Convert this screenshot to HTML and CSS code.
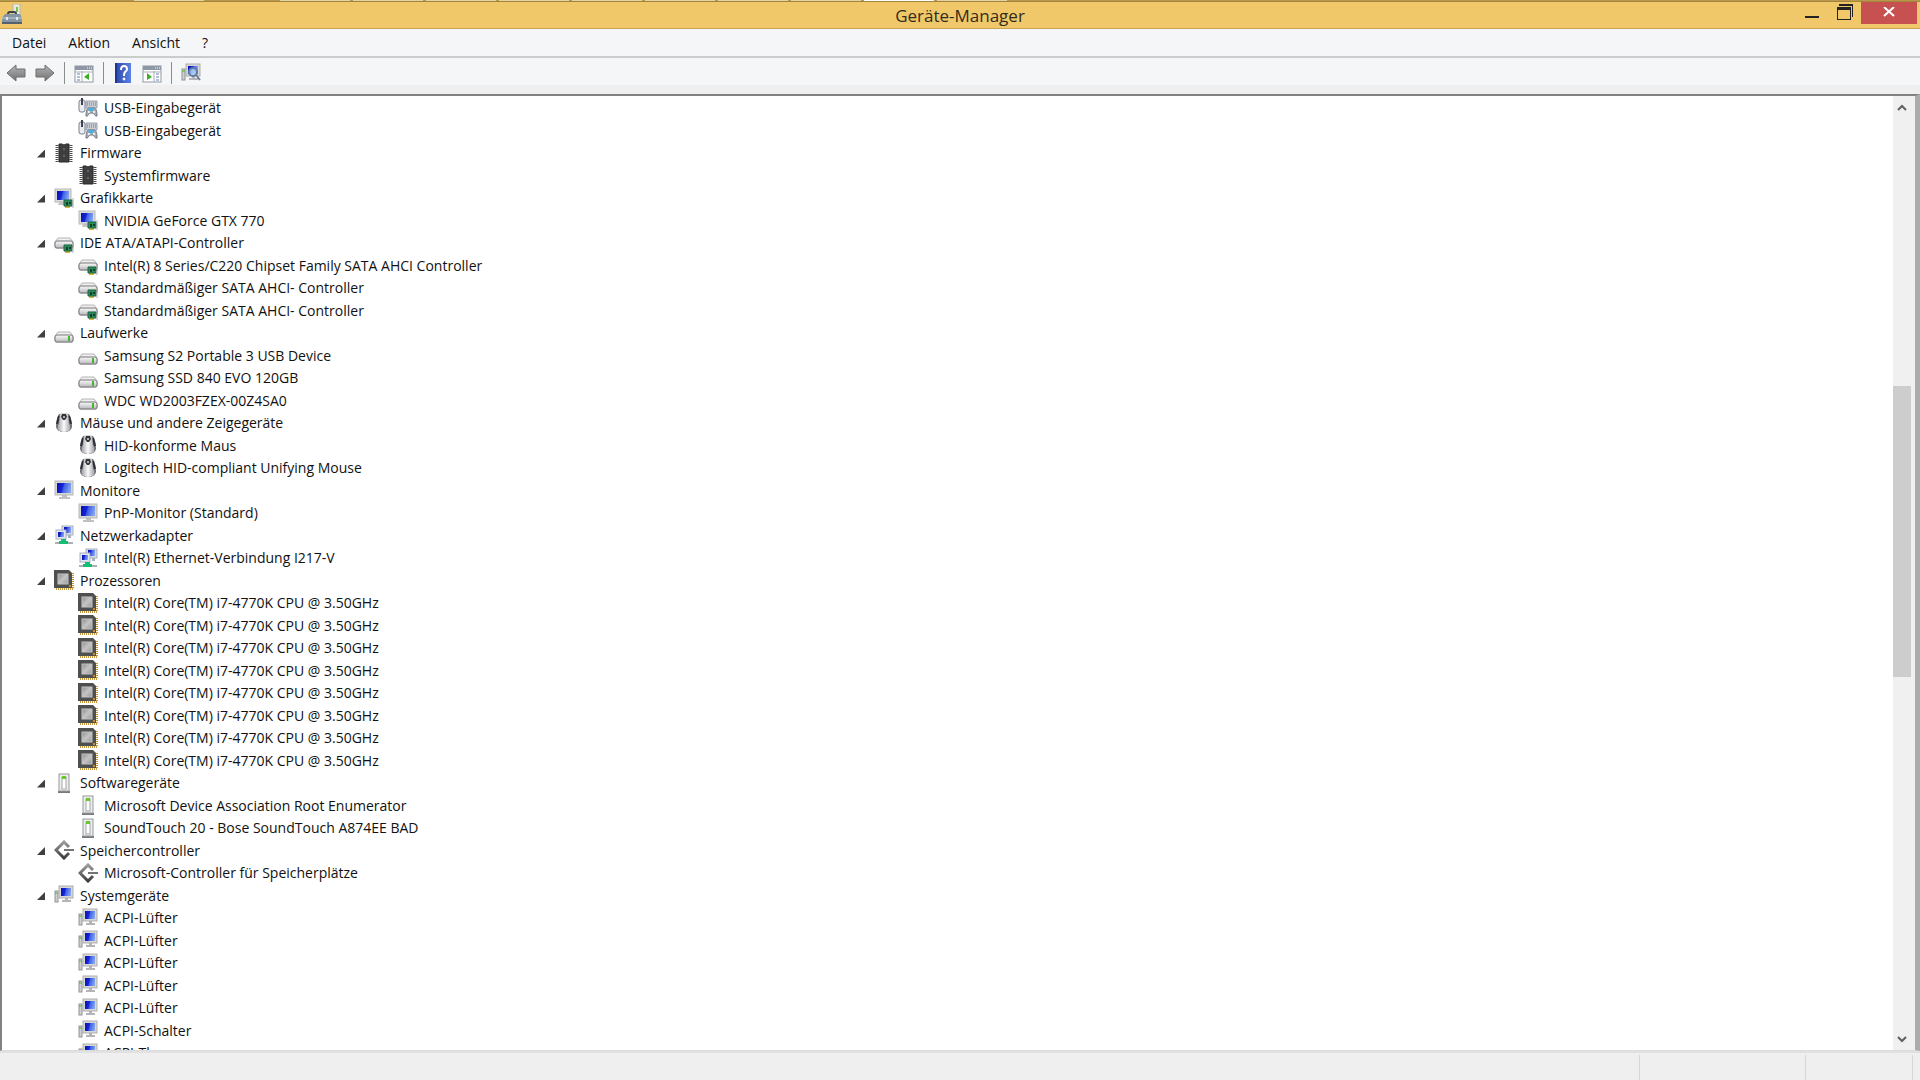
FILE: index.html
```
<!DOCTYPE html>
<html lang="de">
<head>
  <meta charset="UTF-8" />
  <meta name="viewport" content="width=device-width, initial-scale=1.0" />
  <title>Geräte-Manager</title>
  <link rel="stylesheet" href="styles.css">
</head>
<body>
  <!-- Icon sprite -->
  <svg class="sprite" aria-hidden="true">
    <defs>
      <linearGradient id="screen" x1="0" y1="0.3" x2="1" y2="0.5">
        <stop offset="0" stop-color="#0a12b4" />
        <stop offset="0.4" stop-color="#1526d8" />
        <stop offset="0.5" stop-color="#3f5fe4" />
        <stop offset="1" stop-color="#86a6f4" />
      </linearGradient>
      <linearGradient id="metal" x1="0" y1="0" x2="0" y2="1">
        <stop offset="0" stop-color="#fafafa" />
        <stop offset="1" stop-color="#b8b8bc" />
      </linearGradient>
      <linearGradient id="silver" x1="0" y1="0" x2="1" y2="0">
        <stop offset="0" stop-color="#a4a4a8" />
        <stop offset="0.5" stop-color="#fbfbfb" />
        <stop offset="1" stop-color="#a4a4a8" />
      </linearGradient>
      <linearGradient id="grey" x1="0" y1="0" x2="0" y2="1">
        <stop offset="0" stop-color="#b4b4b4" />
        <stop offset="1" stop-color="#727272" />
      </linearGradient>
      <linearGradient id="book" x1="0" y1="0" x2="1" y2="0">
        <stop offset="0" stop-color="#2a46a8" />
        <stop offset="1" stop-color="#5b82e6" />
      </linearGradient>
      <linearGradient id="die" x1="0" y1="0" x2="1" y2="1">
        <stop offset="0" stop-color="#8e8e8e" />
        <stop offset="0.5" stop-color="#c4c4c4" />
        <stop offset="1" stop-color="#9a9a9a" />
      </linearGradient>
      <linearGradient id="diamond" x1="0" y1="0" x2="0" y2="1">
        <stop offset="0" stop-color="#9c9c9c" />
        <stop offset="1" stop-color="#3c3c3c" />
      </linearGradient>
    </defs>

    <symbol id="i-usb" viewBox="0 0 20 20">
      <path d="M8 3h11v7H8z" fill="#c9ccd3" stroke="#9ba0aa" stroke-width="1" />
      <path d="M9 5h9M9 7h9" stroke="#747b88" stroke-dasharray="1 1" />
      <rect x="1" y="2" width="6" height="12" rx="2" fill="#e9ebef" stroke="#7b818c" />
      <path d="M4 0v7" stroke="#3d4350" stroke-width="2" />
      <path d="M8 18c0-5 1-8 3-8h5c2 0 3 3 3 8-2 1-3-3-4-3h-3c-1 0-2 4-4 3z" fill="#a9afb9" stroke="#6c7480" />
      <path d="M10 10h6l-1 3h-4z" fill="#46aee0" />
      <circle cx="11" cy="14" r="1" fill="#fff" /><circle cx="16" cy="14" r="1" fill="#fff" />
    </symbol>
    <symbol id="i-chip" viewBox="0 0 20 20">
      <path d="M3 2v17M17 2v17" stroke="#4c4c4c" stroke-width="3" stroke-dasharray="1 1" />
      <path d="M5 1h3q2 2 4 0h3v18H5z" fill="#3e3e40" stroke="#2a2a2a" />
      <circle cx="10" cy="6" r="1" fill="#6c6e71" /><circle cx="10" cy="13" r="1" fill="#6c6e71" />
    </symbol>
    <symbol id="i-monitor" viewBox="0 0 20 20">
      <path d="M8 15h5v2h3v2H5v-2h3z" fill="#bfc1c4" />
      <rect x="1" y="1" width="18" height="14" fill="#d6d7d4" stroke="#b7b9b5" />
      <rect x="3" y="3" width="14" height="10" fill="url(#screen)" />
    </symbol>
    <symbol id="i-card" viewBox="0 0 20 20">
      <path d="M11 18h5v2h-5z" fill="#e2b13c" />
      <path d="M10 12h8v6h-8z" fill="#2f8b5d" stroke="#17643d" />
      <path d="M12 14h2v3h-2zM15 14h2v2h-2z" fill="#123f2a" />
      <path d="M19 10v10" stroke="#a9acae" />
    </symbol>
    <symbol id="i-display" viewBox="0 0 20 20">
      <path d="M5 14h6v3H4z" fill="#c3c5c8" />
      <rect x="1" y="1" width="16" height="13" fill="#d9dad7" stroke="#b9bbb7" />
      <rect x="3" y="3" width="12" height="9" fill="url(#screen)" />
      <use href="#i-card" />
    </symbol>
    <symbol id="i-drive" viewBox="0 0 20 20">
      <path d="M4 9h12l3 4v5q0 1-1 1H2q-1 0-1-1v-5z" fill="#f0f0f0" stroke="#b4b4b6" />
      <rect x="1" y="12" width="18" height="7" rx="2" fill="url(#metal)" stroke="#77777b" />
      <path d="M15 13v5" stroke="#43b82c" stroke-width="2" />
    </symbol>
    <symbol id="i-ide" viewBox="0 0 20 20">
      <path d="M4 5h12l3 4v5q0 1-1 1H2q-1 0-1-1V9z" fill="#f0f0f0" stroke="#b4b4b6" />
      <rect x="1" y="8" width="18" height="7" rx="2" fill="url(#metal)" stroke="#77777b" />
      <use href="#i-card" />
    </symbol>
    <symbol id="i-mouse" viewBox="0 0 20 20">
      <path d="M5 1q-3 5-3 13 1 5 8 5t8-5q0-8-3-13-5-1-10 0z" fill="#6c7078" />
      <path d="M5 3l-2 8M15 3l2 8" stroke="#2e3138" stroke-width="2" />
      <path d="M6 1q4-1 8 0l1 9q2 4 1 7-6 4-12 0-1-3 1-7z" fill="url(#silver)" />
      <path d="M8 1h4l1 3-2 3H9L7 4z" fill="#33363c" />
      <circle cx="10" cy="4" r="1" fill="#d8d8d8" />
    </symbol>
    <symbol id="i-net" viewBox="0 0 20 20">
      <rect x="8" y="1" width="11" height="9" fill="#d5dbe8" stroke="#a8b0c2" />
      <rect x="10" y="2" width="7" height="6" fill="url(#screen)" />
      <path d="M14 10h3v3h-3z" fill="#a8b0c0" />
      <rect x="2" y="5" width="10" height="9" fill="#e3e7f0" stroke="#a8b0c2" />
      <rect x="4" y="7" width="6" height="5" fill="url(#screen)" />
      <path d="M1 18h18" stroke="#a8b2b0" stroke-width="2" />
      <path d="M7 14h5v2h2v3H5v-3h2z" fill="#17bd72" />
    </symbol>
    <symbol id="i-cpu" viewBox="0 0 20 20">
      <path d="M19 3v16M2 19h17" stroke="#c8963c" stroke-width="2" stroke-dasharray="1 1" />
      <path d="M0 0h15l3 3v15H0z" fill="#4e504f" />
      <rect x="4" y="4" width="10" height="10" fill="url(#die)" stroke="#c4c4c4" />
      <circle cx="16" cy="16" r="1" fill="#ff9c1a" />
    </symbol>
    <symbol id="i-soft" viewBox="0 0 20 20">
      <path d="M4 18h12v2H4z" fill="#77797b" />
      <rect x="5" y="1" width="10" height="17" fill="#eceded" stroke="#97999b" />
      <rect x="8" y="4" width="4" height="12" fill="#fff" stroke="#a5a7a9" />
      <path d="M8 3h4v3H8z" fill="#6cc72f" />
    </symbol>
    <symbol id="i-storage" viewBox="0 0 20 20">
      <path d="M15 7l-5-5-8 8 8 8 5-5" fill="none" stroke="url(#diamond)" stroke-width="3" />
      <path d="M10 10h10" stroke="#747474" stroke-width="2" />
    </symbol>
    <symbol id="i-system" viewBox="0 0 20 20">
      <rect x="1" y="6" width="3" height="11" fill="#cfd1d2" stroke="#909496" />
      <path d="M1 8h3" stroke="#4dbd34" />
      <path d="M11 13h3v2h3v2H8v-2h3z" fill="#b3b5b7" />
      <rect x="5" y="1" width="14" height="12" fill="#d6d7d6" stroke="#adafae" />
      <rect x="7" y="3" width="10" height="8" fill="url(#screen)" />
    </symbol>
  </svg>

  <div class="window">
    <div class="backdrop" aria-hidden="true">
      <span></span><span></span><span></span><span></span><span></span><span></span><span></span><span></span><span></span><span class="active"></span><span></span>
    </div>

    <header class="titlebar">
      <svg class="app-icon" viewBox="0 0 20 20" aria-hidden="true">
        <rect x="11" y="0" width="7" height="13" fill="#e8e9e2" stroke="#b3b6aa" />
        <path d="M14 3h2v5h-2z" fill="#76c043" />
        <path d="M6 10q0-2 2-2h4q2 0 2 2" fill="none" stroke="#39434b" stroke-width="2" />
        <path d="M3 10h15l2 4v6H0v-6z" fill="#8496a3" />
        <path d="M0 14h20" stroke="#c1ccd4" />
        <path d="M0 19h20" stroke="#53626d" stroke-width="2" />
        <path d="M4 13h2v3H4zM14 13h2v3h-2z" fill="#e6eaed" />
      </svg>
      <h1>Geräte-Manager</h1>
      <div class="window-buttons">
        <button class="minimize" aria-label="Minimieren"><svg viewBox="0 0 16 16"><path d="M1 12h14v2H1z" fill="#222" /></svg></button>
        <button class="restore" aria-label="Wiederherstellen"><svg viewBox="0 0 16 16"><path d="M2 0h14v13h-1V2H2z" fill="#222" /><path d="M0 3h14v13H0zM1 6v9h12V6z" fill="#222" fill-rule="evenodd" /></svg></button>
        <button class="close" aria-label="Schließen"><svg viewBox="0 0 12 10"><path d="M1 0l10 9M11 0L1 9" stroke="#fff" stroke-width="2" /></svg></button>
      </div>
    </header>

    <nav class="menubar">
      <button>Datei</button>
      <button>Aktion</button>
      <button>Ansicht</button>
      <button>?</button>
    </nav>

    <div class="toolbar">
      <button aria-label="Zurück"><svg viewBox="0 0 20 20"><path d="M1 10l9-8v4h9v8h-9v4z" fill="url(#grey)" stroke="#6f6f6f" /></svg></button>
      <button aria-label="Vorwärts"><svg viewBox="0 0 20 20"><path d="M19 10l-9-8v4H1v8h9v4z" fill="url(#grey)" stroke="#6f6f6f" /></svg></button>
      <span class="separator"></span>
      <button aria-label="Konsolenstruktur ein-/ausblenden">
        <svg viewBox="0 0 20 20"><rect x="1" y="3" width="18" height="16" fill="#fff" stroke="#9299a3" /><path d="M1 3h18v4H1z" fill="#8e97a5" /><path d="M13 5h1M15 5h1M17 5h1" stroke="#fff" /><path d="M1 9h18M8 8v11" stroke="#a7aeb8" /><path d="M3 11h3M3 14h3M3 17h3" stroke="#5a83b4" /><path d="M15 10v7l-5-3z" fill="#3cae28" /></svg>
      </button>
      <span class="separator"></span>
      <button aria-label="Hilfe">
        <svg viewBox="0 0 20 20"><rect x="2" y="0" width="16" height="20" fill="url(#book)" /><path d="M3 0v20" stroke="#1d3690" stroke-width="2" /><path d="M8 7q0-4 3-4t3 3q0 2-2 3-1 1-1 4" fill="none" stroke="#fff" stroke-width="2" /><circle cx="11" cy="16" r="1" fill="#fff" stroke="#fff" /></svg>
      </button>
      <button aria-label="Aktionsbereich ein-/ausblenden">
        <svg viewBox="0 0 20 20"><rect x="1" y="3" width="18" height="16" fill="#fff" stroke="#9299a3" /><path d="M1 3h18v4H1z" fill="#8e97a5" /><path d="M13 5h1M15 5h1M17 5h1" stroke="#fff" /><path d="M1 9h18M12 8v11" stroke="#a7aeb8" /><path d="M14 11h3M14 14h3M14 17h3" stroke="#5a83b4" /><path d="M5 10v7l5-3z" fill="#3cae28" /></svg>
      </button>
      <span class="separator"></span>
      <button aria-label="Nach geänderter Hardware suchen">
        <svg viewBox="0 0 20 20"><use href="#i-system" /><circle cx="12" cy="9" r="4" fill="#b9dcf8" fill-opacity="0.8" stroke="#5d7ba4" stroke-width="2" /><path d="M15 12l4 5" stroke="#6b7d92" stroke-width="2" /></svg>
      </button>
    </div>

    <main class="content">
      <ul class="tree" role="tree" aria-label="Geräte">
        <li class="device"><svg><use href="#i-usb" /></svg>USB-Eingabegerät</li>
        <li class="device"><svg><use href="#i-usb" /></svg>USB-Eingabegerät</li>
        <li class="category"><button aria-label="Reduzieren"></button><svg><use href="#i-chip" /></svg>Firmware</li>
        <li class="device"><svg><use href="#i-chip" /></svg>Systemfirmware</li>
        <li class="category"><button aria-label="Reduzieren"></button><svg><use href="#i-display" /></svg>Grafikkarte</li>
        <li class="device"><svg><use href="#i-display" /></svg>NVIDIA GeForce GTX 770</li>
        <li class="category"><button aria-label="Reduzieren"></button><svg><use href="#i-ide" /></svg>IDE ATA/ATAPI-Controller</li>
        <li class="device"><svg><use href="#i-ide" /></svg>Intel(R) 8 Series/C220 Chipset Family SATA AHCI Controller</li>
        <li class="device"><svg><use href="#i-ide" /></svg>Standardmäßiger SATA AHCI- Controller</li>
        <li class="device"><svg><use href="#i-ide" /></svg>Standardmäßiger SATA AHCI- Controller</li>
        <li class="category"><button aria-label="Reduzieren"></button><svg><use href="#i-drive" /></svg>Laufwerke</li>
        <li class="device"><svg><use href="#i-drive" /></svg>Samsung S2 Portable 3 USB Device</li>
        <li class="device"><svg><use href="#i-drive" /></svg>Samsung SSD 840 EVO 120GB</li>
        <li class="device"><svg><use href="#i-drive" /></svg>WDC WD2003FZEX-00Z4SA0</li>
        <li class="category"><button aria-label="Reduzieren"></button><svg><use href="#i-mouse" /></svg>Mäuse und andere Zeigegeräte</li>
        <li class="device"><svg><use href="#i-mouse" /></svg>HID-konforme Maus</li>
        <li class="device"><svg><use href="#i-mouse" /></svg>Logitech HID-compliant Unifying Mouse</li>
        <li class="category"><button aria-label="Reduzieren"></button><svg><use href="#i-monitor" /></svg>Monitore</li>
        <li class="device"><svg><use href="#i-monitor" /></svg>PnP-Monitor (Standard)</li>
        <li class="category"><button aria-label="Reduzieren"></button><svg><use href="#i-net" /></svg>Netzwerkadapter</li>
        <li class="device"><svg><use href="#i-net" /></svg>Intel(R) Ethernet-Verbindung I217-V</li>
        <li class="category"><button aria-label="Reduzieren"></button><svg><use href="#i-cpu" /></svg>Prozessoren</li>
        <li class="device"><svg><use href="#i-cpu" /></svg>Intel(R) Core(TM) i7-4770K CPU @ 3.50GHz</li>
        <li class="device"><svg><use href="#i-cpu" /></svg>Intel(R) Core(TM) i7-4770K CPU @ 3.50GHz</li>
        <li class="device"><svg><use href="#i-cpu" /></svg>Intel(R) Core(TM) i7-4770K CPU @ 3.50GHz</li>
        <li class="device"><svg><use href="#i-cpu" /></svg>Intel(R) Core(TM) i7-4770K CPU @ 3.50GHz</li>
        <li class="device"><svg><use href="#i-cpu" /></svg>Intel(R) Core(TM) i7-4770K CPU @ 3.50GHz</li>
        <li class="device"><svg><use href="#i-cpu" /></svg>Intel(R) Core(TM) i7-4770K CPU @ 3.50GHz</li>
        <li class="device"><svg><use href="#i-cpu" /></svg>Intel(R) Core(TM) i7-4770K CPU @ 3.50GHz</li>
        <li class="device"><svg><use href="#i-cpu" /></svg>Intel(R) Core(TM) i7-4770K CPU @ 3.50GHz</li>
        <li class="category"><button aria-label="Reduzieren"></button><svg><use href="#i-soft" /></svg>Softwaregeräte</li>
        <li class="device"><svg><use href="#i-soft" /></svg>Microsoft Device Association Root Enumerator</li>
        <li class="device"><svg><use href="#i-soft" /></svg>SoundTouch 20 - Bose SoundTouch A874EE BAD</li>
        <li class="category"><button aria-label="Reduzieren"></button><svg><use href="#i-storage" /></svg>Speichercontroller</li>
        <li class="device"><svg><use href="#i-storage" /></svg>Microsoft-Controller für Speicherplätze</li>
        <li class="category"><button aria-label="Reduzieren"></button><svg><use href="#i-system" /></svg>Systemgeräte</li>
        <li class="device"><svg><use href="#i-system" /></svg>ACPI-Lüfter</li>
        <li class="device"><svg><use href="#i-system" /></svg>ACPI-Lüfter</li>
        <li class="device"><svg><use href="#i-system" /></svg>ACPI-Lüfter</li>
        <li class="device"><svg><use href="#i-system" /></svg>ACPI-Lüfter</li>
        <li class="device"><svg><use href="#i-system" /></svg>ACPI-Lüfter</li>
        <li class="device"><svg><use href="#i-system" /></svg>ACPI-Schalter</li>
        <li class="device"><svg><use href="#i-system" /></svg>ACPI-Thermozone</li>
      </ul>
      <div class="scrollbar">
        <button aria-label="Nach oben"><svg viewBox="0 0 10 8"><path d="M1 7l4-4 4 4" /></svg></button>
        <div class="track-above"></div>
        <div class="thumb"></div>
        <div class="track-below"></div>
        <button aria-label="Nach unten"><svg viewBox="0 0 10 8"><path d="M1 1l4 4 4-4" /></svg></button>
      </div>
    </main>

    <footer class="statusbar">
      <span></span>
      <span></span>
      <span></span>
    </footer>
  </div>
</body>
</html>
```
FILE: styles.css
```
* {
  margin: 0;
  padding: 0;
  box-sizing: border-box;
}
body {
  font-family: 'Open Sans', 'Noto Sans', sans-serif;
  font-size: 14px;
  color: #111;
  background: #efefef;
  overflow: hidden;
}
button {
  font: inherit;
  color: inherit;
  border: none;
  background: transparent;
}
svg {
  display: block;
  flex: none;
}
.sprite {
  position: absolute;
  width: 0;
  height: 0;
}
.window {
  display: flex;
  flex-direction: column;
  height: 100vh;
}

/* Sliver of the windows behind */
.backdrop {
  display: flex;
  gap: 3px;
  height: 2px;
  padding-left: 134px;
  background: #b8984c;
  border-bottom: 1px solid #a5853c;
}
.backdrop span {
  width: 70px;
  background: #e2d3a4;
}
.backdrop span:first-child {
  margin-right: 73px;
}
.backdrop .active {
  background: #fff;
}

/* Title bar */
.titlebar {
  display: grid;
  grid-template-columns: 1fr auto 1fr;
  height: 27px;
  background: #f0c869;
  border-bottom: 1px solid #c9a353;
}
.app-icon {
  width: 20px;
  height: 20px;
  margin: 2px;
}
.titlebar h1 {
  font-size: 17px;
  font-weight: 400;
  line-height: 27px;
  color: #332c1c;
}
.window-buttons {
  display: flex;
  justify-content: flex-end;
  padding-right: 3px;
}
.window-buttons button {
  display: flex;
  justify-content: center;
  width: 33px;
  height: 22px;
  padding-top: 2px;
}
.window-buttons svg {
  width: 16px;
  height: 16px;
}
.window-buttons .close {
  width: 56px;
  padding-top: 5px;
  background: #c75050;
}
.window-buttons .close svg {
  width: 12px;
  height: 10px;
}

/* Menu and toolbar */
.menubar {
  display: flex;
  gap: 22px;
  height: 29px;
  padding-left: 12px;
  background: #f5f6f7;
  border-bottom: 2px solid #cbcbcb;
}
.toolbar {
  display: flex;
  align-items: center;
  height: 27px;
  padding: 2px 0 0 6px;
  background: #f5f6f7;
}
.toolbar button {
  margin-right: 9px;
}
.toolbar svg {
  width: 20px;
  height: 20px;
}
.separator {
  width: 1px;
  height: 22px;
  margin-right: 9px;
  background: #8c8c8c;
}

/* Device tree */
.content {
  display: flex;
  flex: 1;
  min-height: 0;
  margin-top: 9px;
  border: 1px solid #dcdcdc;
  border-top: 2px solid #828282;
  border-left: 2px solid #828282;
  border-right: 5px solid #ababa9;
  background: #fff;
}
.tree {
  display: grid;
  flex: 1;
  grid-auto-rows: 23px 22px;
  align-content: start;
  overflow: hidden;
  list-style: none;
}
.tree li {
  display: flex;
  align-items: center;
  white-space: pre;
}
.tree svg {
  width: 20px;
  height: 20px;
  margin-right: 6px;
}
.device {
  padding-left: 76px;
}
.category {
  padding-left: 35px;
}
.category button {
  width: 8px;
  height: 8px;
  margin: 2px 9px 0 0;
  background: #404040;
  clip-path: polygon(100% 0, 100% 100%, 0 100%);
}

/* Scroll bar */
.scrollbar {
  display: flex;
  flex-direction: column;
  width: 22px;
  padding-right: 4px;
  background: #f0f0f0;
}
.scrollbar button {
  display: flex;
  justify-content: center;
  align-items: center;
  height: 21px;
}
.scrollbar svg {
  width: 10px;
  height: 8px;
}
.scrollbar path {
  fill: none;
  stroke: #606060;
  stroke-width: 2;
}
.track-above {
  flex: 269;
}
.thumb {
  flex: 290;
  background: #cdcdcd;
}
.track-below {
  flex: 352;
}

/* Status bar */
.statusbar {
  display: flex;
  height: 29px;
  padding: 2px 7px 0 0;
  border-top: 2px solid #e1e1e1;
  background: #efefef;
}
.statusbar span {
  width: 107px;
  border-right: 1px solid #d7d7d7;
}
.statusbar span:first-child {
  flex: 1;
}
.statusbar span:nth-child(2) {
  width: 166px;
}
```
